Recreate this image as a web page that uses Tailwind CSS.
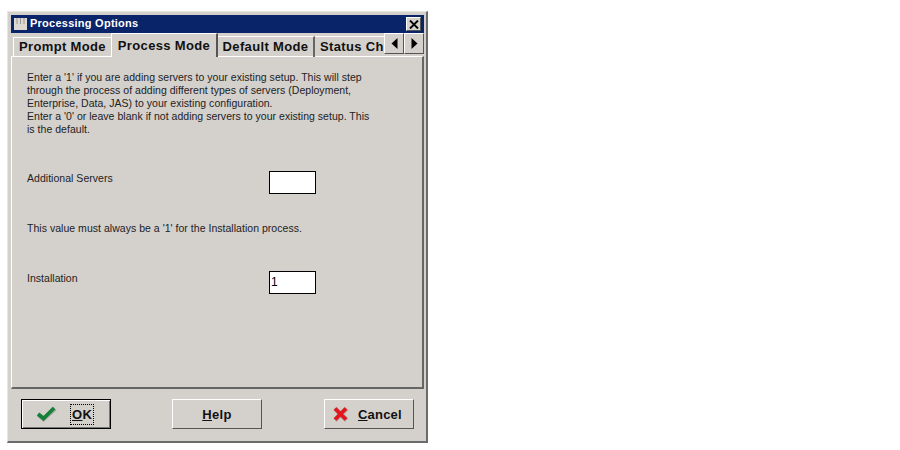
<!DOCTYPE html>
<html lang="en">
<head>
    <meta charset="UTF-8">
    <title>Processing Options</title>
    <script src="https://cdn.jsdelivr.net/npm/@tailwindcss/browser@4"></script>
</head>
<body class="bg-white w-[900px] h-[450px] overflow-hidden font-['Liberation_Sans',sans-serif] text-[#111]">
    <!-- Dialog window -->
    <div class="mt-[11px] ml-[7px] w-[421px] h-[432px] bg-[#d4d0cc] border-t border-l border-t-[#e8e6e1] border-l-[#e8e6e1] border-r-2 border-b-2 border-r-[#6b6b6b] border-b-[#6b6b6b] pt-[3px] pl-[3px] pr-[2px]">
        <!-- Title bar -->
        <div class="h-[18px] bg-[#0a246a] flex items-center pl-[3px] pr-[3px]">
            <svg width="13" height="12" viewBox="0 0 13 12" class="shrink-0"><rect width="13" height="12" fill="#dcd9d2"/><path d="M3 0v6M6.500 0v6M10 0v6" stroke="#9a9792" stroke-width="1"/></svg>
            <span class="ml-[3px] -mt-[2px] text-white font-bold text-[11px] tracking-[0.25px] leading-none">Processing Options</span>
            <div class="ml-auto w-[15px] h-[14px] bg-[#d4d0cc] border border-t-white border-l-white border-r-[#555] border-b-[#555] flex items-center justify-center">
                <svg width="10" height="9" viewBox="0 0 10 9"><path d="M1 0.500L9 8.500M9 0.500L1 8.500" stroke="#000" stroke-width="1.9"/></svg>
            </div>
        </div>

        <!-- Tabs -->
        <div class="flex items-end h-[24px] relative z-10 pl-[2px] text-[13px] font-bold tracking-[0.35px] overflow-hidden">
            <div class="w-[98px] h-[21px] border-t border-l border-t-white border-l-white flex items-center justify-center -mb-px pb-[2px]">Prompt Mode</div>
            <div class="w-[107px] h-[24px] bg-[#d4d0cc] border-t border-l border-r-2 border-t-white border-l-white border-r-[#555] flex items-start pt-[2px] justify-center">Process Mode</div>
            <div class="w-[97px] h-[21px] border-t border-r-2 border-t-white border-r-[#666] flex items-center justify-center pb-[1px]">Default Mode</div>
            <div class="w-[69px] h-[21px] border-t border-t-white flex items-center pl-[5px] pb-[1px] overflow-hidden whitespace-nowrap">Status Ch</div>
            <div class="self-start flex">
                <div class="w-[20px] h-[21px] bg-[#d4d0cc] border border-t-white border-l-white border-r-[#555] border-b-[#555] flex items-center justify-center">
                    <svg width="7" height="11" viewBox="0 0 7 11"><path d="M6.500 0V11L0.500 5.500Z" fill="#000"/></svg>
                </div>
                <div class="w-[20px] h-[21px] bg-[#d4d0cc] border border-t-white border-l-white border-r-[#555] border-b-[#555] flex items-center justify-center">
                    <svg width="7" height="11" viewBox="0 0 7 11"><path d="M0.500 0V11L6.500 5.500Z" fill="#000"/></svg>
                </div>
            </div>
        </div>

        <!-- Tab panel -->
        <div class="h-[333px] -mt-px border-t border-l border-t-white border-l-white border-r-2 border-b-2 border-r-[#666] border-b-[#666] pl-[15px] pt-[14px] text-[10.5px] tracking-[0.03px] leading-[13px] text-[#222]">
            <p class="whitespace-nowrap">Enter a '1' if you are adding servers to your existing setup. This will step<br>through the process of adding different types of servers (Deployment,<br>Enterprise, Data, JAS) to your existing configuration.<br>Enter a '0' or leave blank if not adding servers to your existing setup. This<br>is the default.</p>

            <div class="flex mt-[35px] items-start">
                <span class="w-[242px] pt-[1px]">Additional Servers</span>
                <div class="w-[47px] h-[23px] bg-white border border-black"></div>
            </div>

            <p class="mt-[28px]">This value must always be a '1' for the Installation process.</p>

            <div class="flex mt-[36px] items-start">
                <span class="w-[242px] pt-[1px]">Installation</span>
                <div class="w-[47px] h-[23px] bg-white border border-black text-black text-[12px] leading-[20px] pl-[1px]">1</div>
            </div>
        </div>

        <!-- Buttons -->
        <div class="flex px-[10px] mt-[10px] text-[13px] font-bold tracking-[0.35px]">
            <button class="w-[90px] h-[30px] flex items-center border border-black shadow-[inset_1px_1px_0_#fff,inset_-1px_-1px_0_#777]">
                <svg width="22" height="16" viewBox="0 0 22 16" class="ml-[14px]">
                    <path d="M2.500 8.500L7.500 13L19 2.500" fill="none" stroke="#a5a29a" stroke-width="4.500"/>
                    <path d="M2 8L7.500 12.500L18 2" fill="none" stroke="#14803a" stroke-width="3.600"/>
                </svg>
                <span class="ml-[13px] mt-[1px] px-[1px] outline-1 outline-dotted outline-black"><span class="underline">O</span>K</span>
            </button>
            <button class="ml-[61px] w-[90px] h-[30px] flex items-center justify-center border border-t-white border-l-white border-r-[#555] border-b-[#555]"><span class="mt-[1px]"><span class="underline">H</span>elp</span></button>
            <button class="ml-[62px] w-[90px] h-[30px] flex items-center border border-t-white border-l-white border-r-[#555] border-b-[#555]">
                <svg width="17" height="16" viewBox="0 0 17 16" class="ml-[7px]">
                    <path d="M3 2.500L14.500 14M14.500 2.500L3 14" stroke="#a9a49c" stroke-width="4.800"/>
                    <path d="M3 2.500L14 13.500M14 2.500L3 13.500" stroke="#e4161c" stroke-width="3.800"/>
                </svg>
                <span class="ml-[9px] mt-[1px] tracking-[0.2px]"><span class="underline">C</span>ancel</span>
            </button>
        </div>
    </div>
</body>
</html>
